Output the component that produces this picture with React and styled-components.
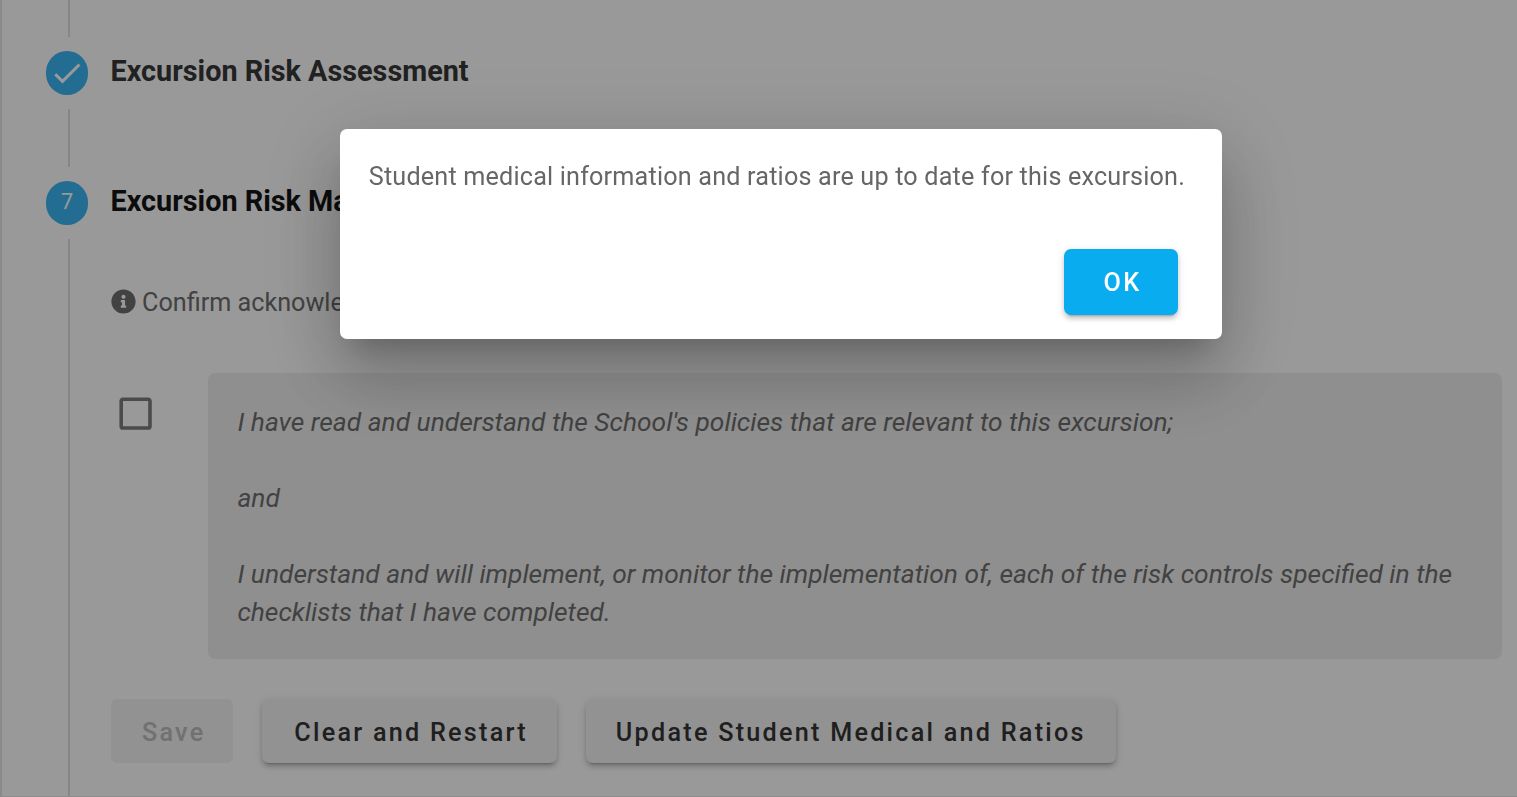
import React from "react";
import styled, { createGlobalStyle } from 'styled-components'
import { FaInfoCircle } from 'react-icons/fa'

const GlobalStyle = createGlobalStyle`
    * { box-sizing: border-box; }
    body {
        margin: 0;
        background: #fff;
        font-family: Roboto, "Liberation Sans", sans-serif;
        font-size: 25.2px;
        overflow: hidden;
    }`

const Page = styled.div`
    height: 797px;
    overflow: hidden;
    border-left: 2px solid #e4e4e4;
    border-bottom: 1px solid #ebe8ea;`

const StepHeader = styled.div`
    display: flex;
    align-items: center;
    gap: 22.5px;
    height: 72px;
    padding-left: 44px;`

const StepCircle = styled.div`
    display: flex;
    align-items: center;
    justify-content: center;
    width: 42px;
    height: 44px;
    border-radius: 22px;
    background: #39b6f2;
    color: #fff;
    font-size: 21.6px;
    line-height: 38px;
    padding-bottom: ${props => props.$number ? '2px' : '0'};`

const StepLabel = styled.div`
    padding-bottom: 4px;
    font-size: 28.8px;
    font-weight: 700;
    color: ${props => props.$active ? '#141414' : '#373737'};
    white-space: nowrap;`

const Connector = styled.div`
    height: ${props => props.$height}px;
    margin-left: 66px;
    border-left: 2px solid #e0e0e0;`

const StepContent = styled.div`
    height: 600px;
    margin-left: 66px;
    padding: 44px 15px 0 41px;
    border-left: 2px solid #e0e0e0;
    color: #6e6e6e;`

const Hint = styled.div`
    display: flex;
    align-items: center;
    gap: 6px;
    height: 38px;
    margin-bottom: 52px;
    white-space: nowrap;

    svg {
        width: 25px;
        height: 25px;
        margin-bottom: 2px;
    }`

const Acknowledgement = styled.div`
    display: flex;
    align-items: flex-start;
    margin-bottom: 40px;`

const CheckboxSlot = styled.div`
    flex: 0 0 97px;
    padding: 18.5px 0 0 3.4px;

    svg {
        display: block;
        fill: #7e7e7e;
    }`

const Quote = styled.div`
    flex: 1;
    padding: 30px 28px 28px 29.4px;
    border-radius: 7px;
    background: #efefef;
    font-size: 26.36px;
    font-style: italic;
    line-height: 38px;`

const Paragraph = styled.p`
    margin: 0 0 38px;

    &:last-child {
        margin-bottom: 0;
    }`

const Actions = styled.div`
    display: flex;
    gap: 29px;`

const Button = styled.button`
    display: flex;
    align-items: center;
    justify-content: center;
    width: ${props => props.$width}px;
    height: ${props => props.$primary ? 66 : 64}px;
    padding: ${props => props.$primary ? 0 : 2}px 0 0 ${props => props.$shift || 0}px;
    border: 0;
    border-radius: 7px;
    background: ${props => props.$primary ? '#0aacf0' : '#f3f3f3'};
    color: ${props => props.$primary ? '#fff' : '#343434'};
    font-family: inherit;
    font-size: 25.2px;
    font-weight: 500;
    letter-spacing: .0892857143em;
    white-space: nowrap;
    box-shadow: 0 5px 2px -4px rgba(0,0,0,.2), 0 4px 4px 0 rgba(0,0,0,.14), 0 2px 9px 0 rgba(0,0,0,.12);

    &:disabled {
        color: #bcbcbc;
        box-shadow: none;
    }`

const Overlay = styled.div`
    position: fixed;
    inset: 0;
    display: flex;
    align-items: flex-start;
    padding: 129px 0 0 340px;
    background: rgba(0,0,0,.4);`

const Dialog = styled.div`
    display: flex;
    flex-direction: column;
    justify-content: space-between;
    width: 882px;
    height: 210px;
    padding: 28.8px 44px 24px 28.8px;
    border-radius: 7px;
    background: #fff;
    box-shadow: 0 20px 27px -13px rgba(0,0,0,.2), 0 43px 68px 5px rgba(0,0,0,.14), 0 16px 83px 14px rgba(0,0,0,.12);`

const Message = styled.div`
    color: #666;
    line-height: 37.8px;
    letter-spacing: .0071428571em;
    white-space: nowrap;`

const DialogActions = styled.div`
    display: flex;
    justify-content: flex-end;`

const CheckIcon = () => (
    <svg width="36" height="36" viewBox="0 0 24 24" fill="#fff">
        <path d="M21,7L9,19L3.5,13.5L4.91,12.09L9,16.17L19.59,5.59L21,7Z" />
    </svg>
)

const BlankCheckbox = () => (
    <svg width="43.2" height="43.2" viewBox="0 0 24 24">
        <path d="M19,3H5C3.89,3 3,3.89 3,5V19A2,2 0 0,0 5,21H19A2,2 0 0,0 21,19V5C21,3.89 20.1,3 19,3M19,5V19H5V5H19Z" />
    </svg>
)

const App = () => (
    <>
        <GlobalStyle />
        <Page>
            <Connector $height={37} />
            <StepHeader>
                <StepCircle><CheckIcon /></StepCircle>
                <StepLabel>Excursion Risk Assessment</StepLabel>
            </StepHeader>
            <Connector $height={58} />
            <StepHeader>
                <StepCircle $number>7</StepCircle>
                <StepLabel $active>Excursion Risk Management</StepLabel>
            </StepHeader>
            <StepContent>
                <Hint><FaInfoCircle /> Confirm acknowledgement</Hint>
                <Acknowledgement>
                    <CheckboxSlot><BlankCheckbox /></CheckboxSlot>
                    <Quote>
                        <Paragraph>I have read and understand the School's policies that are relevant to this excursion;</Paragraph>
                        <Paragraph>and</Paragraph>
                        <Paragraph>
                            I understand and will implement, or monitor the implementation of, each of the risk controls specified in the
                            checklists that I have completed.
                        </Paragraph>
                    </Quote>
                </Acknowledgement>
                <Actions>
                    <Button $width={122.4} $shift={3} disabled>Save</Button>
                    <Button $width={294.4} $shift={3}>Clear and Restart</Button>
                    <Button $width={530}>Update Student Medical and Ratios</Button>
                </Actions>
            </StepContent>
        </Page>
        <Overlay>
            <Dialog>
                <Message>Student medical information and ratios are up to date for this excursion.</Message>
                <DialogActions>
                    <Button $primary $width={114} $shift={3}>OK</Button>
                </DialogActions>
            </Dialog>
        </Overlay>
    </>
)

export default App;
